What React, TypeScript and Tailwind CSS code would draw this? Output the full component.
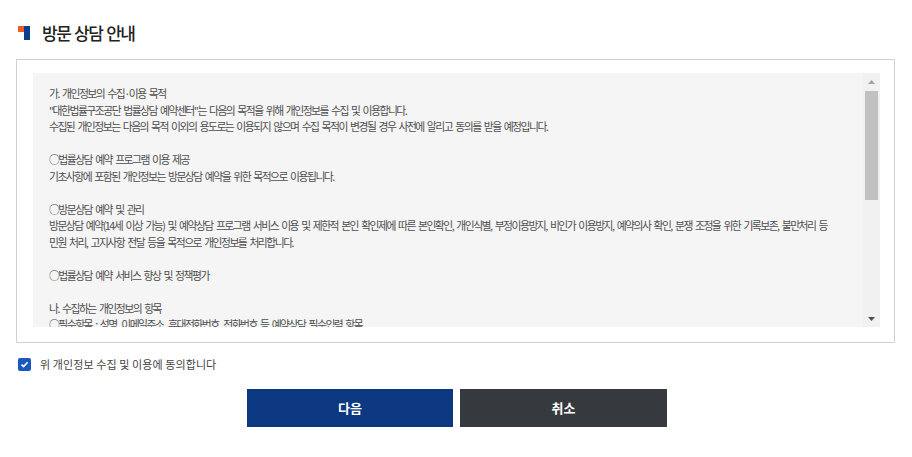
import React from "react";

const lines: string[] = [
  "가. 개인정보의 수집·이용 목적",
  "\"대한법률구조공단 법률상담 예약센터\"는 다음의 목적을 위해 개인정보를 수집 및 이용합니다.",
  "수집된 개인정보는 다음의 목적 이외의 용도로는 이용되지 않으며 수집 목적이 변경될 경우 사전에 알리고 동의를 받을 예정입니다.",
  "",
  "○법률상담 예약 프로그램 이용 제공",
  "기초사항에 포함된 개인정보는 방문상담 예약을 위한 목적으로 이용됩니다.",
  "",
  "○방문상담 예약 및 관리",
  "방문상담 예약(14세 이상 가능) 및 예약상담 프로그램 서비스 이용 및 제한적 본인 확인제에 따른 본인확인, 개인식별, 부정이용방지, 비인가 이용방지, 예약의사 확인, 분쟁 조정을 위한 기록보존, 불만처리 등",
  "민원 처리, 고지사항 전달 등을 목적으로 개인정보를 처리합니다.",
  "",
  "○법률상담 예약 서비스 향상 및 정책평가",
  "",
  "나. 수집하는 개인정보의 항목",
  "○필수항목 : 성명, 이메일주소, 휴대전화번호, 전화번호 등 예약상담 필수입력 항목",
  "○선택항목 : 상담희망지역, 상담분야 등",
  "",
];

export default function App() {
  return (
    <div
      className="w-[912px] h-[457px] bg-white overflow-hidden"
      style={{ fontFamily: '"Noto Sans CJK KR", "Noto Sans", sans-serif' }}
    >
      {/* Title */}
      <div className="flex items-center h-[22px] mt-[22px] pl-[18px]">
        <div className="flex items-start h-[14px]">
          <div className="w-[6px] h-[6px] bg-[#ef5b25]" />
          <div className="w-[6px] h-[14px] bg-[#0d3d8e]" />
        </div>
        <h2 className="ml-[12px] text-[17px] font-medium tracking-[-1.5px] [word-spacing:1.5px] text-[#222] leading-[22px]">
          방문 상담 안내
        </h2>
      </div>

      {/* Outer box */}
      <div className="ml-[16px] mt-[15px] w-[879px] border border-[#d2d2d2] pt-[13px] pb-[15px] pl-[16px] pr-[14px]">
        <div className="flex h-[254px] bg-[#f5f5f5] overflow-hidden">
          <div className="flex-1 overflow-hidden pl-[16px] pt-[12px]">
            <div className="text-[10.8px] leading-[16.5px] tracking-[-1.5px] [word-spacing:2.2px] text-[#4d4d4d]">
              {lines.map((l, i) => (
                <div key={i} className="whitespace-nowrap h-[16.5px]">
                  {l}
                </div>
              ))}
            </div>
          </div>
          {/* Scrollbar */}
          <div className="w-[17px] bg-[#f1f1f1] flex flex-col">
            <div className="h-[17px] flex items-center justify-center">
              <svg width="7" height="4" viewBox="0 0 7 4">
                <polygon points="3.5,0 7,4 0,4" fill="#a3a3a3" />
              </svg>
            </div>
            <div className="mx-[2px] mt-[1px] h-[109px] bg-[#c1c1c1]" />
            <div className="flex-1" />
            <div className="h-[17px] flex items-center justify-center">
              <svg width="7" height="4" viewBox="0 0 7 4">
                <polygon points="0,0 7,0 3.5,4" fill="#505050" />
              </svg>
            </div>
          </div>
        </div>
      </div>

      {/* Checkbox */}
      <div className="flex items-center mt-[14px] pl-[18px] h-[14px]">
        <div className="w-[13px] h-[13px] rounded-[2px] bg-[#1a58c0] flex items-center justify-center">
          <svg width="9" height="9" viewBox="0 0 9 9">
            <path
              d="M1.5 4.6 L3.6 6.6 L7.6 2.2"
              fill="none"
              stroke="#ffffff"
              strokeWidth="1.6"
            />
          </svg>
        </div>
        <span className="ml-[9px] text-[11px] tracking-[0.1px] text-[#444] leading-[14px]">
          위 개인정보 수집 및 이용에 동의합니다
        </span>
      </div>

      {/* Buttons */}
      <div className="flex justify-center gap-[7px] mt-[18px] pl-[2px]">
        <button className="w-[206px] h-[38px] bg-[#0c3781] text-white text-[13px] font-bold">
          다음
        </button>
        <button className="w-[207px] h-[38px] bg-[#36393e] text-white text-[13px] font-bold">
          취소
        </button>
      </div>
    </div>
  );
}
